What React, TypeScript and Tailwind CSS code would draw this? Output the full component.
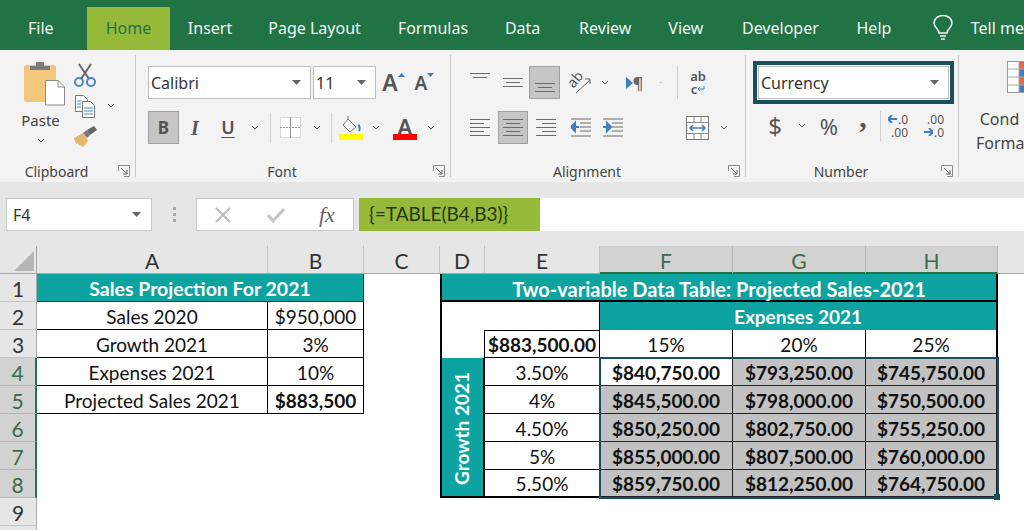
import React from 'react';

const Chev = ({ className = '' }: { className?: string }) => (
  <svg width="8" height="5" viewBox="0 0 8 5" className={className}>
    <path d="M1 1l3 3 3-3" fill="none" stroke="#555" strokeWidth="1" />
  </svg>
);

const Caret = () => (
  <svg width="9" height="5" viewBox="0 0 9 5">
    <path d="M0 0h9L4.5 5z" fill="#666" />
  </svg>
);

const Launcher = () => (
  <svg width="12" height="12" viewBox="0 0 12 12">
    <path d="M.5 6V.5H11.5V11.5H6" fill="none" stroke="#8a8a8a" />
    <path d="M3 3l6 6M9 5v4H5" fill="none" stroke="#666" />
  </svg>
);

// stack of horizontal rules used by the alignment buttons
const Lines = ({ rows, w = 18, h = 20 }: { rows: [number, number][]; w?: number; h?: number }) => (
  <svg width={w} height={h} viewBox={`0 0 ${w} ${h}`}>
    {rows.map(([x, len], i) => (
      <rect key={i} x={x} y={i * 4 + 1} width={len} height="1" fill="#6b6b6b" />
    ))}
  </svg>
);

const Indent = ({ flip }: { flip?: boolean }) => (
  <svg width="20" height="20" viewBox="0 0 20 20">
    <path d="M0 1h20M9 5h11M9 9h11M9 13h11M0 18h20" stroke="#6b6b6b" strokeWidth="1" />
    {flip ? (
      <path d="M0 9h5M4 5l4 4-4 4z" stroke="#3e7fbd" strokeWidth="2" fill="#3e7fbd" />
    ) : (
      <path d="M8 9H3M4 5L0 9l4 4z" stroke="#3e7fbd" strokeWidth="2" fill="#3e7fbd" />
    )}
  </svg>
);

const tabs: [string, string][] = [
  ['File', 'w-[82px]'],
  ['Home', 'w-[84px]'],
  ['Insert', 'w-[80px]'],
  ['Page Layout', 'w-[130px]'],
  ['Formulas', 'w-[108px]'],
  ['Data', 'w-[72px]'],
  ['Review', 'w-[94px]'],
  ['View', 'w-[68px]'],
  ['Developer', 'w-[122px]'],
  ['Help', 'w-[66px]'],
];

const TitleBar = () => (
  <div className="flex h-[50px] bg-[#217346] text-[16px] text-[#f1f6f3]">
    {tabs.map(([name, width]) =>
      name === 'Home' ? (
        <div key={name} className={`${width} ml-[5px] mt-[7px] flex items-center justify-center bg-[#97b93a] pb-[2px] text-[#217346]`}>
          {name}
        </div>
      ) : (
        <div key={name} className={`${width} flex items-center justify-center pt-[6px]`}>
          {name}
        </div>
      )
    )}
    <div className="ml-[26px] flex items-center gap-[18px] pt-[6px]">
      <svg width="20" height="26" viewBox="0 0 20 26" fill="none" stroke="#f1f6f3" strokeWidth="1.5">
        <path d="M6 18c0-4-5-5-5-10a9 7.500 0 0 1 18 0c0 5-5 6-5 10z" />
        <path d="M7 21h6M8 24h4" />
      </svg>
      <span className="whitespace-nowrap">Tell me</span>
    </div>
  </div>
);

const Group = ({ label, width, launcher = true, children }: { label?: string; width: string; launcher?: boolean; children: React.ReactNode }) => (
  <div className={`${width} flex h-[122px] shrink-0 flex-col border-r border-[#c8c8c8]`}>
    <div className="h-[106px] shrink-0">{children}</div>
    {label && (
      <div className="flex h-[20px] shrink-0 items-center text-[14px] text-[#444]">
        <span className="flex-1 text-center">{label}</span>
        {launcher && (
          <span className="flex w-[22px] justify-center">
            <Launcher />
          </span>
        )}
      </div>
    )}
  </div>
);

const Slot = ({ w, children }: { w: string; children?: React.ReactNode }) => (
  <div className={`${w} flex h-[33px] shrink-0 items-center justify-center`}>{children}</div>
);

const Sep = () => <div className="ml-[5px] mr-px h-[30px] w-px shrink-0 bg-[#d0d0d0]" />;

const Pressed = ({ w, children }: { w: string; children: React.ReactNode }) => (
  <div className={`${w} flex h-[33px] shrink-0 items-center justify-center border border-[#a0a0a0] bg-[#c6c6c6]`}>{children}</div>
);

const Select = ({ w, text, ml = '' }: { w: string; text: string; ml?: string }) => (
  <div className={`${w} ${ml} flex h-[33px] shrink-0 items-center justify-between border border-[#bdbdbd] bg-white pl-[2px] pr-[9px] text-[16px] text-[#333]`}>
    <span>{text}</span>
    <Caret />
  </div>
);

const ClipboardGroup = () => (
  <Group label="Clipboard" width="w-[136px]">
    <div className="flex pt-[5px]">
      <div className="ml-[21px] flex w-[44px] flex-col items-center">
        <svg width="44" height="46" viewBox="0 0 44 46">
          <rect x="3" y="5" width="32" height="37" rx="2" fill="#f3c77b" />
          <path d="M9 10V6h6V2h8v4h6v4z" fill="#7a7a7a" />
          <path d="M24.500 20.500H37l6.500 6.500v18H24.500z" fill="#fff" stroke="#8a8a8a" />
          <path d="M37 20.500V27h6.500" fill="none" stroke="#8a8a8a" />
        </svg>
        <span className="-ml-[5px] mt-[2px] text-[15px] leading-[24px] text-[#444]">Paste</span>
        <Chev className="-ml-[5px] mt-[6px]" />
      </div>
      <div className="ml-[8px] flex w-[24px] flex-col items-center">
        <svg width="22" height="24" viewBox="0 0 22 24" className="mt-[3px]" fill="none">
          <path d="M5 1l10 15M17 1L7 16" stroke="#666" strokeWidth="2" />
          <circle cx="5" cy="19" r="4" stroke="#4d86bd" strokeWidth="2" />
          <circle cx="17" cy="19" r="4" stroke="#4d86bd" strokeWidth="2" />
        </svg>
        <svg width="22" height="24" viewBox="0 0 22 24" className="mt-[7px]">
          <path d="M1.500 1.500h8l4 4v12h-12z" fill="#fff" stroke="#777" />
          <path d="M8.500 7.500h8l4 4v12h-12z" fill="#fff" stroke="#777" />
          <path d="M3 7h4M3 10h4M3 13h4" stroke="#4d86bd" />
          <path d="M10 14h9M10 17h9M10 20h9" stroke="#4d86bd" />
        </svg>
        <svg width="24" height="22" viewBox="0 0 24 22" className="mt-[8px]">
          <path d="M1 12l9-5 5 8-5 6-3-2-1 1-1-3-2 1z" fill="#e6b56c" />
          <path d="M10 7l4-3 3 5-3 3z" fill="#7a7a7a" />
          <path d="M14 4l7-4 3 4-7 5z" fill="#666" />
        </svg>
      </div>
      <Chev className="ml-[10px] mt-[43px]" />
    </div>
  </Group>
);

const FontGroup = () => (
  <Group label="Font" width="w-[315px]">
    <div className="pl-[12px] pt-[11px]">
      <div className="flex">
        <Select w="w-[163px]" text="Calibri" />
        <Select w="w-[63px]" ml="ml-[2px]" text="11" />
        <Slot w="w-[28px]">
          <span className="relative text-[23px] font-semibold leading-none text-[#555]">
            A<svg width="7" height="4" viewBox="0 0 7 4" className="absolute -right-[7px] top-[2px]"><path d="M0 4h7L3.500 0z" fill="#3e7fbd" /></svg>
          </span>
        </Slot>
        <Slot w="w-[34px]">
          <span className="relative mt-[2px] text-[19px] font-semibold leading-none text-[#555]">
            A<svg width="7" height="4" viewBox="0 0 7 4" className="absolute -right-[7px] -top-[1px]"><path d="M0 0h7L3.500 4z" fill="#3e7fbd" /></svg>
          </span>
        </Slot>
      </div>
      <div className="mt-[12px] flex items-center text-[#555]">
        <Pressed w="w-[31px]"><span className="text-[17px] font-bold">B</span></Pressed>
        <Slot w="w-[32px]"><span className="font-['Liberation_Serif',serif] text-[20px] font-bold italic">I</span></Slot>
        <Slot w="w-[34px]"><span className="text-[18px] font-semibold underline underline-offset-[3px]">U</span></Slot>
        <Slot w="w-[20px]"><Chev /></Slot>
        <Sep />
        <Slot w="w-[36px]">
          <svg width="21" height="21" viewBox="0 0 21 21" fill="#fff">
            <rect x=".5" y=".5" width="20" height="20" stroke="#bbb" strokeDasharray="1 1" />
            <path d="M10.500 0v21" stroke="#999" />
            <path d="M0 10.500h21" stroke="#999" strokeDasharray="2 1" />
          </svg>
        </Slot>
        <Slot w="w-[18px]"><Chev /></Slot>
        <Sep />
        <Slot w="w-[36px]">
          <svg width="24" height="24" viewBox="0 0 24 24">
            <path d="M9 3l8 8-6 5-7-7z" fill="#fff" stroke="#777" />
            <path d="M9 3V0" stroke="#777" />
            <path d="M19 9c2 1 2 4 1 6" fill="none" stroke="#3e7fbd" strokeWidth="2" />
            <rect y="18" width="24" height="6" fill="#ffff00" />
          </svg>
        </Slot>
        <Slot w="w-[14px]"><Chev /></Slot>
        <div className="ml-[4px]">
          <Slot w="w-[36px]">
            <span className="flex w-[24px] flex-col items-center">
              <span className="h-[18px] text-[22px] font-semibold leading-[20px]">A</span>
              <span className="h-[6px] w-[24px] bg-[#ff0000]" />
            </span>
          </Slot>
        </div>
        <Slot w="w-[16px]"><Chev /></Slot>
      </div>
    </div>
  </Group>
);

const AlignmentGroup = () => (
  <Group label="Alignment" width="w-[295px]">
    <div className="pl-[19px] pt-[11px]">
      <div className="flex">
        <Slot w="w-[20px]"><span className="-mt-[14px]"><Lines rows={[[0, 20], [3, 14]]} w={20} h={8} /></span></Slot>
        <Slot w="w-[39px]"><span className="ml-[6px]"><Lines rows={[[0, 20], [3, 14], [0, 20]]} w={20} h={12} /></span></Slot>
        <Pressed w="w-[31px]"><span className="mt-[10px]"><Lines rows={[[0, 20], [3, 14], [0, 20]]} w={20} h={12} /></span></Pressed>
        <Slot w="w-[40px]">
          <svg width="24" height="24" viewBox="0 0 24 24" className="overflow-visible">
            <text x="0" y="12" fontSize="14" fill="#555" fontFamily="Noto Sans, sans-serif" transform="rotate(-50 9 9)">ab</text>
            <path d="M8 22L22 9M17 8h5v5" fill="none" stroke="#666" />
          </svg>
        </Slot>
        <Slot w="w-[10px]"><Chev /></Slot>
        <Slot w="w-[49px]">
          <span className="flex items-center text-[16px] font-semibold leading-none text-[#666]">
            <svg width="7" height="12" viewBox="0 0 7 12"><path d="M0 0l7 6-7 6z" fill="#3e7fbd" /></svg>¶
          </span>
        </Slot>
        <Slot w="w-[3px]"><Chev /></Slot>
        <div className="ml-[15px] h-[33px] w-px bg-[#d0d0d0]" />
        <Slot w="w-[40px]">
          <span className="flex flex-col items-center text-[13px] font-semibold leading-[13px] text-[#555]">
            <span>ab</span>
            <span className="flex items-center">c<svg width="8" height="7" viewBox="0 0 8 7"><path d="M7 0v3H2M3 1L1 3l2 2" fill="none" stroke="#3e7fbd" /></svg></span>
          </span>
        </Slot>
      </div>
      <div className="mt-[12px] flex items-center">
        <Slot w="w-[20px]"><Lines rows={[[0, 20], [0, 14], [0, 20], [0, 14], [0, 20]]} w={20} h={20} /></Slot>
        <Slot w="w-[8px]" />
        <Pressed w="w-[30px]"><Lines rows={[[0, 20], [3, 14], [0, 20], [3, 14], [0, 20]]} w={20} h={20} /></Pressed>
        <Slot w="w-[8px]" />
        <Slot w="w-[20px]"><Lines rows={[[0, 20], [6, 14], [0, 20], [6, 14], [0, 20]]} w={20} h={20} /></Slot>
        <Slot w="w-[15px]" />
        <Slot w="w-[20px]"><Indent /></Slot>
        <Slot w="w-[12px]" />
        <Slot w="w-[20px]"><Indent flip /></Slot>
        <Slot w="w-[62px]" />
        <Slot w="w-[24px]">
          <svg width="23" height="24" viewBox="0 0 23 24">
            <rect x=".5" y=".5" width="22" height="23" fill="#fff" stroke="#777" />
            <path d="M0 6.500h23M0 17.500h23M8 0v6M15 0v6M8 18v6M15 18v6" stroke="#888" />
            <path d="M4 12h15M7 9l-3 3 3 3M16 9l3 3-3 3" fill="none" stroke="#3e7fbd" strokeWidth="1.500" />
          </svg>
        </Slot>
        <Slot w="w-[30px]"><Chev /></Slot>
      </div>
    </div>
  </Group>
);

const NumberGroup = () => (
  <Group label="Number" width="w-[213px]">
    <div className="pl-[7px] pt-[6px]">
      <div className="w-[201px] border-[4px] border-[#17505c] bg-white p-px">
        <Select w="w-[191px]" text="Currency" />
      </div>
      <div className="mt-[5px] flex items-center text-[#555]">
        <Slot w="w-[44px]"><span className="text-[24px] leading-none">$</span></Slot>
        <Slot w="w-[10px]"><Chev /></Slot>
        <Slot w="w-[44px]"><span className="text-[22px] leading-none">%</span></Slot>
        <Slot w="w-[24px]"><span className="mb-[18px] font-['Liberation_Serif',serif] text-[30px] font-bold leading-none">,</span></Slot>
        <div className="ml-[5px] h-[30px] w-px bg-[#d0d0d0]" />
        <Slot w="w-[34px]">
          <span className="flex flex-col items-end text-[12px] leading-[13px]">
            <span className="flex items-center"><svg width="9" height="8" viewBox="0 0 9 8" className="mr-px"><path d="M4 0L0 4l4 4M1 4h8" fill="none" stroke="#3e7fbd" strokeWidth="2" /></svg>.0</span>
            <span>.00</span>
          </span>
        </Slot>
        <Slot w="w-[38px]">
          <span className="flex flex-col items-end text-[12px] leading-[13px]">
            <span>.00</span>
            <span className="flex items-center"><svg width="9" height="8" viewBox="0 0 9 8" className="mr-px"><path d="M5 0l4 4-4 4M8 4H0" fill="none" stroke="#3e7fbd" strokeWidth="2" /></svg>.0</span>
          </span>
        </Slot>
      </div>
    </div>
  </Group>
);

const StylesGroup = () => (
  <div className="flex w-[64px] shrink-0 flex-col">
    <svg width="36" height="32" viewBox="0 0 36 32" className="ml-[48px] mt-[6px] shrink-0">
      <rect x=".5" y=".5" width="35" height="31" fill="#fff" stroke="#999" />
      <rect x="12" y="1" width="12" height="7" fill="#e0694a" />
      <rect x="12" y="8" width="12" height="8" fill="#3e7fbd" />
      <rect x="12" y="16" width="12" height="8" fill="#e0694a" />
      <rect x="12" y="24" width="12" height="7" fill="#3e7fbd" />
      <path d="M0 8h36M0 16h36M0 24h36M12 0v32" stroke="#aaa" />
    </svg>
    <div className="mt-[14px] whitespace-nowrap pl-[17px] text-center text-[16px] leading-[24px] text-[#444]">
      Cond<br />Forma
    </div>
  </div>
);

const Ribbon = () => (
  <div className="flex h-[132px] overflow-hidden bg-[#f3f3f3] pt-[5px]">
    <ClipboardGroup />
    <FontGroup />
    <AlignmentGroup />
    <NumberGroup />
    <StylesGroup />
  </div>
);

const FormulaBar = () => (
  <div className="flex h-[64px] items-start bg-[#e6e6e6] pt-[16px] text-[16px] text-[#333]">
    <div className="ml-[6px] flex h-[33px] w-[146px] items-center justify-between border border-[#c8c8c8] bg-white pl-[6px] pr-[10px]">
      <span>F4</span>
      <Caret />
    </div>
    <div className="flex h-[33px] w-[44px] flex-col items-center justify-center gap-[3px]">
      <span className="h-[3px] w-[3px] bg-[#aaa]" />
      <span className="h-[3px] w-[3px] bg-[#aaa]" />
      <span className="h-[3px] w-[3px] bg-[#aaa]" />
    </div>
    <div className="flex h-[33px] w-[158px] items-center border border-[#c8c8c8] bg-white pl-[18px]">
      <svg width="16" height="16" viewBox="0 0 16 16"><path d="M1 1l14 14M15 1L1 15" stroke="#bdbdbd" strokeWidth="2" /></svg>
      <svg width="18" height="16" viewBox="0 0 18 16" className="ml-[36px]"><path d="M1 8l5 6L17 2" fill="none" stroke="#c4c4c4" strokeWidth="3" /></svg>
      <span className="ml-[34px] font-['Liberation_Serif',serif] text-[22px] italic text-[#666]">fx</span>
    </div>
    <div className="ml-[5px] flex h-[33px] w-[181px] items-center bg-[#97b93a] pl-[10px] font-['Lato',sans-serif] text-[19px] text-[#24380f]">
      {'{=TABLE(B4,B3)}'}
    </div>
    <div className="h-[33px] flex-1 bg-white" />
  </div>
);

const teal = 'bg-[#0ca3a0] font-bold text-white';
const cellBorder = 'border-r border-b border-black';

const Cell = ({ className = '', children }: { className?: string; children?: React.ReactNode }) => (
  <div className={`flex items-center justify-center whitespace-nowrap pt-[3px] ${className}`}>{children}</div>
);

const ColHead = ({ name, on }: { name: string; on?: boolean }) => (
  <Cell className={`border-r text-[21px] ${on ? 'border-b-2 border-r-[#b5b5b5] border-b-[#217346] bg-[#d2d2d2] text-[#3a6b4f]' : 'border-b border-r-[#c4c4c4] border-b-[#a8a8a8] bg-[#e6e6e6] text-[#333]'}`}>
    {name}
  </Cell>
);

const RowHead = ({ n, on }: { n?: number; on?: boolean }) => (
  <Cell className={`border-b text-[21px] ${on ? 'border-r-2 border-r-[#217346] border-b-[#b5b5b5] bg-[#d2d2d2] text-[#3a6b4f]' : 'border-r border-r-[#a8a8a8] border-b-[#c4c4c4] bg-[#e6e6e6] text-[#333]'}`}>
    {n}
  </Cell>
);

const growth = ['3.50%', '4%', '4.50%', '5%', '5.50%'];
const results = [
  ['$840,750.00', '$793,250.00', '$745,750.00'],
  ['$845,500.00', '$798,000.00', '$750,500.00'],
  ['$850,250.00', '$802,750.00', '$755,250.00'],
  ['$855,000.00', '$807,500.00', '$760,000.00'],
  ['$859,750.00', '$812,250.00', '$764,750.00'],
];
const projection: [string, string, boolean?][] = [
  ['Sales 2020', '$950,000'],
  ['Growth 2021', '3%'],
  ['Expenses 2021', '10%'],
  ['Projected Sales 2021', '$883,500', true],
];

const Sheet = () => (
  <div className="relative grid grid-cols-[37px_231px_96px_76px_45px_115px_133px_133px_132px_26px] grid-rows-[28px_repeat(10,28px)] bg-white font-['Lato',sans-serif] text-[19px] text-[#111]">
    {/* header row */}
    <div className="flex items-end justify-end border-b border-r border-[#a8a8a8] bg-[#e6e6e6] p-[2px]">
      <svg width="20" height="20" viewBox="0 0 20 20"><path d="M20 0v20H0z" fill="#b5b5b5" /></svg>
    </div>
    {['A', 'B', 'C', 'D', 'E'].map((c) => <ColHead key={c} name={c} />)}
    {['F', 'G', 'H'].map((c) => <ColHead key={c} name={c} on />)}
    <div className="border-b border-[#a8a8a8] bg-[#e6e6e6]" />

    {/* row 1 */}
    <RowHead n={1} />
    <Cell className={`col-span-2 border-b border-r border-[#333] text-[19.500px] ${teal}`}>Sales Projection For 2021</Cell>
    <div />
    <Cell className={`col-span-5 border-x-2 border-b-2 border-black text-[20px] ${teal}`}>Two-variable Data Table: Projected Sales-2021</Cell>
    <div />

    {/* rows 2-3 */}
    <RowHead n={2} />
    <Cell className={cellBorder}>{projection[0][0]}</Cell>
    <Cell className={cellBorder}>{projection[0][1]}</Cell>
    <div />
    <div className="col-span-2 border-l-2 border-r border-black" />
    <Cell className={`col-span-3 border-r-2 border-black ${teal}`}>Expenses 2021</Cell>
    <div />

    <RowHead n={3} />
    <Cell className={cellBorder}>{projection[1][0]}</Cell>
    <Cell className={cellBorder}>{projection[1][1]}</Cell>
    <div />
    <div className="border-l-2 border-r border-black" />
    <Cell className="border-y border-r border-black font-bold">$883,500.00</Cell>
    <Cell className="border-r border-black">15%</Cell>
    <Cell className="border-r border-black">20%</Cell>
    <Cell className="border-r-2 border-black">25%</Cell>
    <div />

    {/* rows 4-8 */}
    {growth.map((g, i) => (
      <React.Fragment key={g}>
        <RowHead n={i + 4} on />
        {i < 2 ? (
          <>
            <Cell className={cellBorder}>{projection[i + 2][0]}</Cell>
            <Cell className={`${cellBorder} ${projection[i + 2][2] ? 'font-bold' : ''}`}>{projection[i + 2][1]}</Cell>
          </>
        ) : (
          <div className="col-span-2" />
        )}
        <div />
        {i === 0 && (
          <Cell className={`row-span-5 border-x-2 border-b-2 border-black ${teal}`}>
            <span className="rotate-180 [writing-mode:vertical-rl]">Growth 2021</span>
          </Cell>
        )}
        <Cell className={`border-r border-black ${i === 4 ? 'border-b-2' : 'border-b'}`}>{g}</Cell>
        {results[i].map((v, j) => (
          <Cell key={v} className={`font-bold ${i === 4 ? 'border-b-2' : 'border-b'} border-[#222] ${j < 2 ? 'border-r' : 'border-r-2'} ${i === 0 && j === 0 ? 'bg-white' : 'bg-[#c2c2c2]'}`}>
            {v}
          </Cell>
        ))}
        <div />
      </React.Fragment>
    ))}

    {/* rows 9-10 */}
    <RowHead n={9} />
    <div className="col-span-9" />
    <RowHead />
    <div className="col-span-9" />

    {/* selection F4:H8 */}
    <div className="pointer-events-none absolute left-[599px] top-[111px] h-[142px] w-[400px] border-[2px] border-[#17505c]">
      <span className="absolute -bottom-[3px] -right-[3px] h-[6px] w-[6px] bg-[#17505c]" />
    </div>
  </div>
);

export default function App() {
  return (
    <div className="h-[530px] w-[1024px] overflow-hidden bg-white font-['Noto_Sans',sans-serif]">
      <TitleBar />
      <Ribbon />
      <FormulaBar />
      <Sheet />
    </div>
  );
}
